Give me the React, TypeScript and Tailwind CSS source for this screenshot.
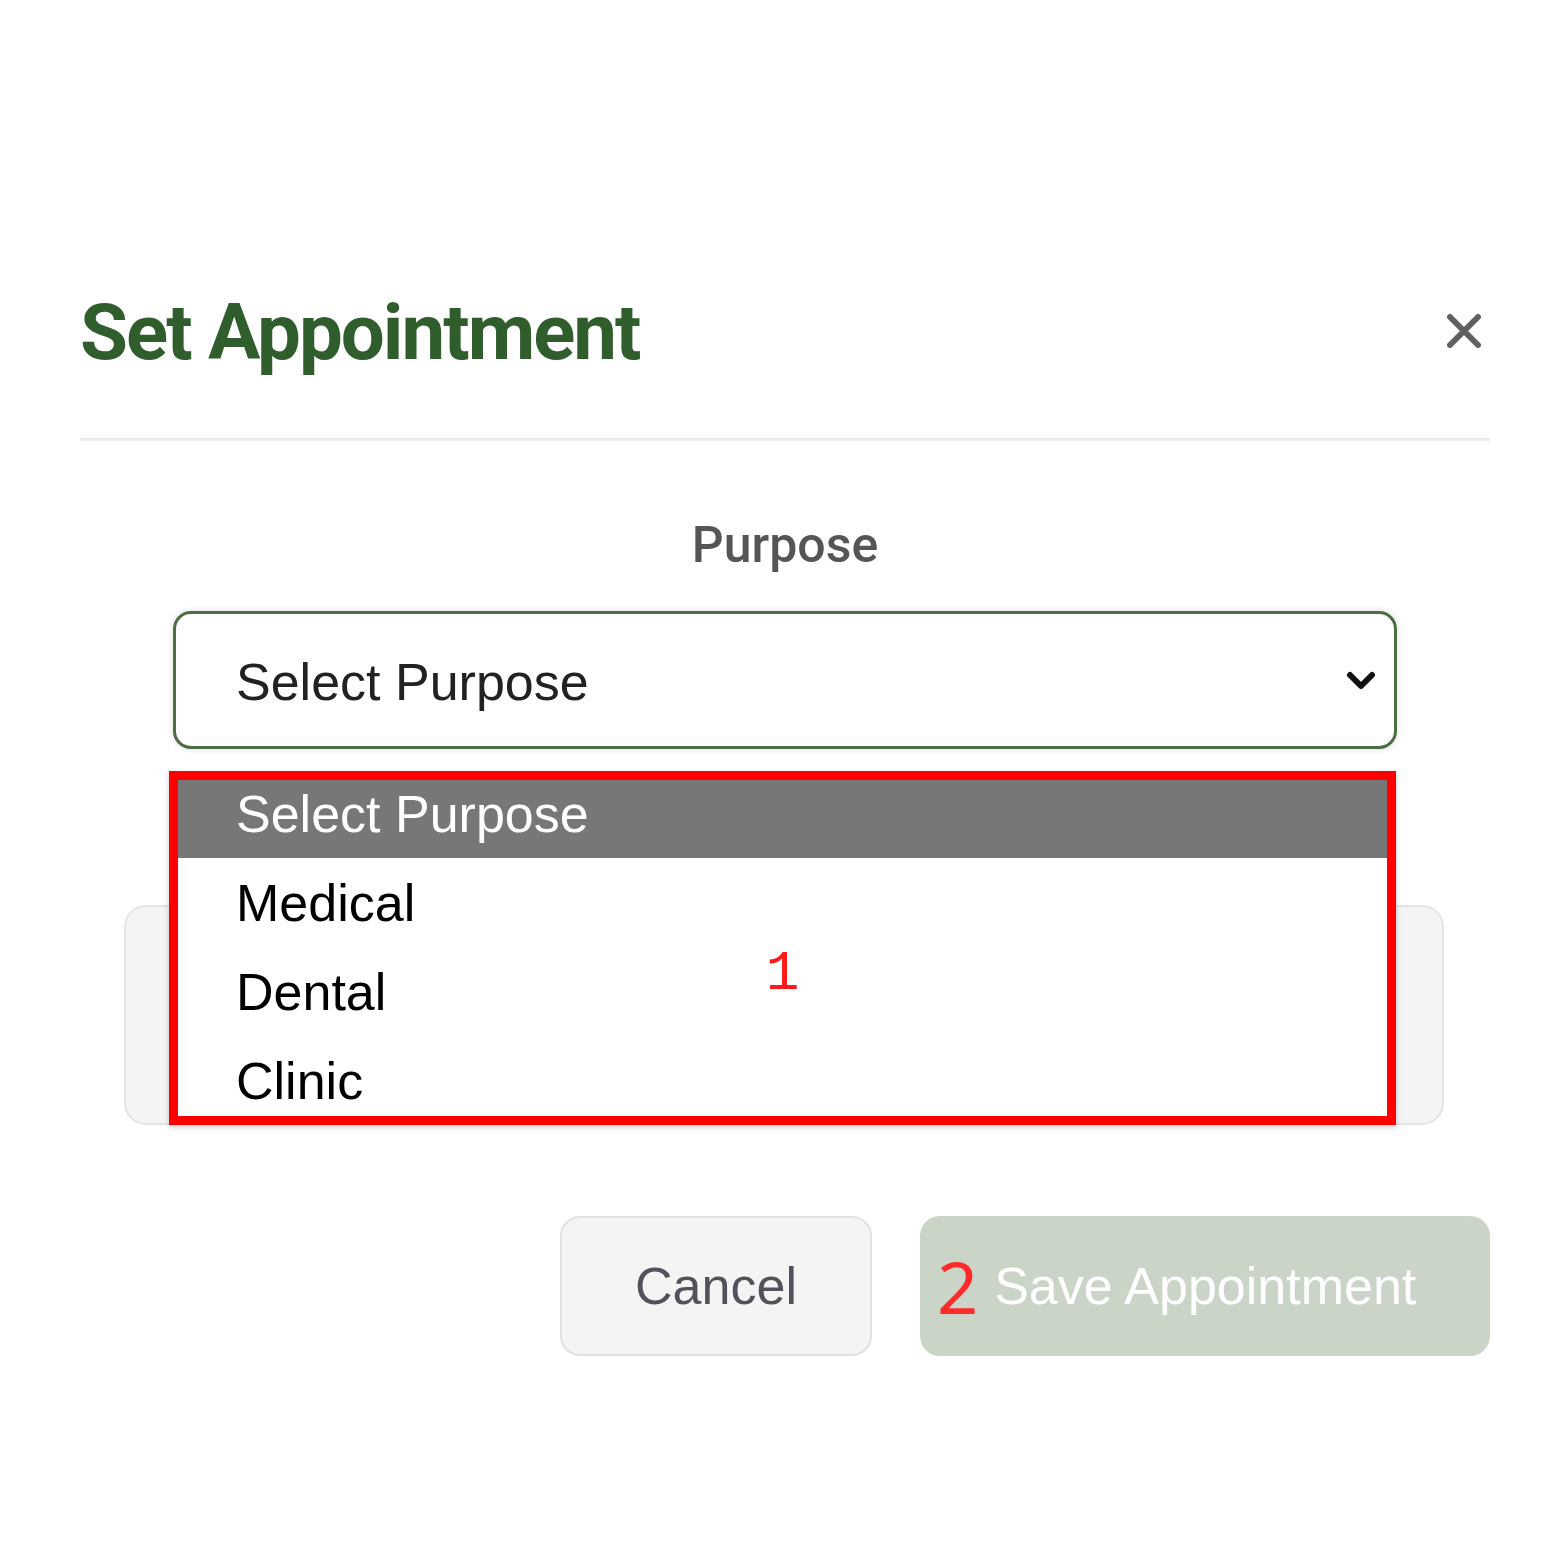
import { useState } from "react";

const options = ["Select Purpose", "Medical", "Dental", "Clinic"];

export default function App() {
  const [selected] = useState(0);

  return (
    <div className="min-h-[1563px] w-full bg-white">
      <div className="ml-[80px] w-[1410px] pt-[288px]">
        {/* Header */}
        <div className="flex items-start justify-between">
          <h2 className="h-[90px] text-[78px] leading-[90px] font-bold tracking-[-2px] text-[#2f5d2c] font-['Roboto',sans-serif]">
            Set Appointment
          </h2>
          <button className="mt-[25px] mr-[8px] text-[#606060]" aria-label="Close">
            <svg width="36" height="36" viewBox="0 0 36 36">
              <path d="M4 4 L32 32 M32 4 L4 32" stroke="currentColor" strokeWidth="6" strokeLinecap="round" />
            </svg>
          </button>
        </div>

        <div className="mt-[60px] border-t-[3px] border-[#ebebeb]" />

        {/* Purpose field */}
        <div className="mt-[74px] text-center text-[50px] leading-[60px] font-medium text-[#555] font-['Roboto',sans-serif]">
          Purpose
        </div>

        <div className="relative mx-[93px] mt-[36px]">
          <div className="flex h-[138px] items-center justify-between rounded-[18px] border-[3px] border-[#4d6e44] bg-white pl-[60px] pr-[16px] shadow-[0_0_6px_rgba(0,0,0,0.15)] font-['Liberation_Sans',Arial,sans-serif]">
            <span className="pt-[4px] text-[52px] text-[#222]">Select Purpose</span>
            <svg width="34" height="24" viewBox="0 0 34 24">
              <path d="M6 7 L17 18 L28 7" fill="none" stroke="#111" strokeWidth="6" strokeLinecap="round" strokeLinejoin="round" />
            </svg>
          </div>

          {/* Open dropdown list */}
          <div className="absolute left-[-4px] top-[160px] z-10 h-[354px] w-[1227px] overflow-hidden border-[9px] border-[#ff0000] bg-white shadow-[0_2px_6px_rgba(0,0,0,0.2)] font-['Liberation_Sans',Arial,sans-serif]">
            {options.map((o, i) =>
              i === 0 ? (
                <div
                  key={o}
                  className={
                    selected === i
                      ? "h-[78px] bg-[#777777] pl-[58px] pt-[8px] text-[52px] leading-[52px] text-white"
                      : "h-[78px] pl-[58px] pt-[8px] text-[52px] leading-[52px] text-black"
                  }
                >
                  {o}
                </div>
              ) : (
                <div key={o} className="flex h-[89px] items-center pl-[58px] text-[52px] text-black">
                  {o}
                </div>
              )
            )}
            <span className="absolute left-1/2 top-[166px] -translate-x-1/2 text-[56px] leading-none text-[#ff1a1a] font-['Liberation_Mono',monospace]">
              1
            </span>
          </div>
        </div>

        {/* Card behind the dropdown */}
        <div className="mt-[156px] ml-[44px] mr-[46px] h-[220px] rounded-[22px] border-2 border-[#e4e4e4] bg-[#f4f4f4]" />

        {/* Footer buttons */}
        <div className="mt-[91px] flex justify-end gap-[48px] font-['Liberation_Sans',Arial,sans-serif]">
          <button className="h-[140px] w-[312px] rounded-[20px] border-2 border-[#e2e2e2] bg-[#f4f4f4] text-[52px] text-[#50545a]">
            Cancel
          </button>
          <button className="flex h-[140px] w-[570px] items-center gap-[16px] rounded-[20px] bg-[#cad5c8] pl-[17px] text-[52px] text-white">
            <span className="text-[72px] leading-none text-[#ff2a2a] font-['Noto_Sans',sans-serif]">2</span>
            <span>Save Appointment</span>
          </button>
        </div>
      </div>
    </div>
  );
}
